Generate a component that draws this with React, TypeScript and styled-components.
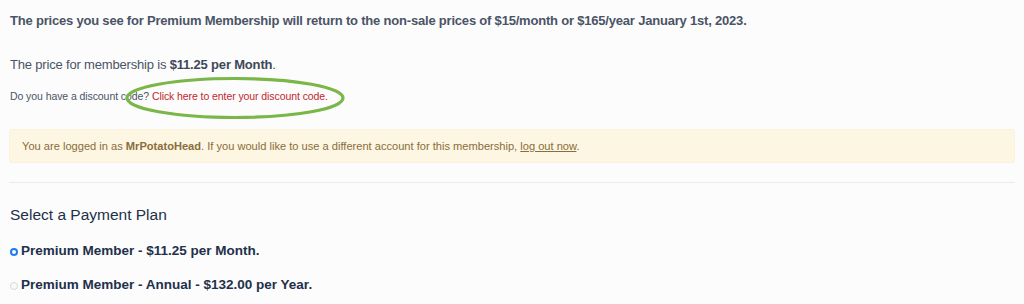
import React from "react";
import styled, { createGlobalStyle } from "styled-components";

const Global = createGlobalStyle`
  html, body { margin: 0; padding: 0; background: #fcfcfc; }
  body { font-family: "Liberation Sans", Arial, sans-serif; }
`;

const Page = styled.div`
  position: relative;
  width: 1024px;
  height: 304px;
  overflow: hidden;
  padding: 0 9px 0 10px;
  box-sizing: border-box;
  background: #fcfcfc;
`;

const SaleNote = styled.p`
  margin: 0;
  padding-top: 13px;
  font-size: 13px;
  letter-spacing: -0.2px;
  line-height: 16px;
  font-weight: 700;
  color: #4a5466;
`;

const PriceLine = styled.p`
  margin: 28px 0 0;
  font-size: 13px;
  letter-spacing: -0.18px;
  line-height: 16px;
  color: #4a5466;
  b { color: #3e4859; }
`;

const DiscountLine = styled.p`
  margin: 17px 0 0;
  font-size: 10.5px;
  letter-spacing: -0.08px;
  line-height: 13px;
  color: #4a5466;
`;

const DiscountLink = styled.a`
  color: #c0272d;
  text-decoration: none;
`;

const Notice = styled.div`
  margin: 26px 0 0 -1px;
  height: 34px;
  box-sizing: border-box;
  padding: 0 12px;
  display: flex;
  align-items: center;
  background: #fcf6e2;
  border: 1px solid #f9f1da;
  border-radius: 3px;
  font-size: 11.1px;
  color: #8a6d3b;
  b { font-weight: 700; }
  a { color: #8a6d3b; text-decoration: underline; }
`;

const Divider = styled.hr`
  margin: 19px 0 0 -1px;
  border: 0;
  border-top: 1px solid #ebebeb;
`;

const SectionTitle = styled.h3`
  margin: 23px 0 0;
  font-size: 15.5px;
  line-height: 18px;
  font-weight: 400;
  color: #22304a;
`;

const PlanList = styled.div`
  display: flex;
  flex-direction: column;
  gap: 18px;
  margin-top: 19px;
`;

const PlanRow = styled.label`
  display: flex;
  align-items: center;
  gap: 3px;
  font-size: 13.5px;
  line-height: 16px;
  font-weight: 700;
  color: #22304a;
`;

const Radio = styled.span<{ $checked?: boolean }>`
  width: 8px;
  height: 8px;
  border-radius: 50%;
  box-sizing: border-box;
  flex: none;
  margin-top: 2px;
  background: ${(p) => (p.$checked ? "#fff" : "#fafafa")};
  border: ${(p) => (p.$checked ? "2.5px solid #1a7cf0" : "1px solid #d8d8d8")};
`;

const Annotation = styled.svg`
  position: absolute;
  left: 125px;
  top: 76px;
  pointer-events: none;
`;

export default function App() {
  return (
    <>
      <Global />
      <Page>
        <SaleNote>
          The prices you see for Premium Membership will return to the non-sale prices of $15/month or $165/year January 1st, 2023.
        </SaleNote>
        <PriceLine>
          The price for membership is <b>$11.25 per Month</b>.
        </PriceLine>
        <DiscountLine>
          Do you have a discount code? <DiscountLink href="#">Click here to enter your discount code.</DiscountLink>
        </DiscountLine>
        <Notice>
          <span>
            You are logged in as <b>MrPotatoHead</b>. If you would like to use a different account for this membership, <a href="#">log out now</a>.
          </span>
        </Notice>
        <Divider />
        <SectionTitle>Select a Payment Plan</SectionTitle>
        <PlanList>
          <PlanRow>
            <Radio $checked />
            Premium Member - $11.25 per Month.
          </PlanRow>
          <PlanRow>
            <Radio />
            Premium Member - Annual - $132.00 per Year.
          </PlanRow>
        </PlanList>
        <Annotation width="224" height="46" viewBox="0 0 224 46">
          <ellipse cx="110" cy="22" rx="108" ry="19.5" fill="none" stroke="#7ab648" strokeWidth="3.2" />
        </Annotation>
      </Page>
    </>
  );
}
